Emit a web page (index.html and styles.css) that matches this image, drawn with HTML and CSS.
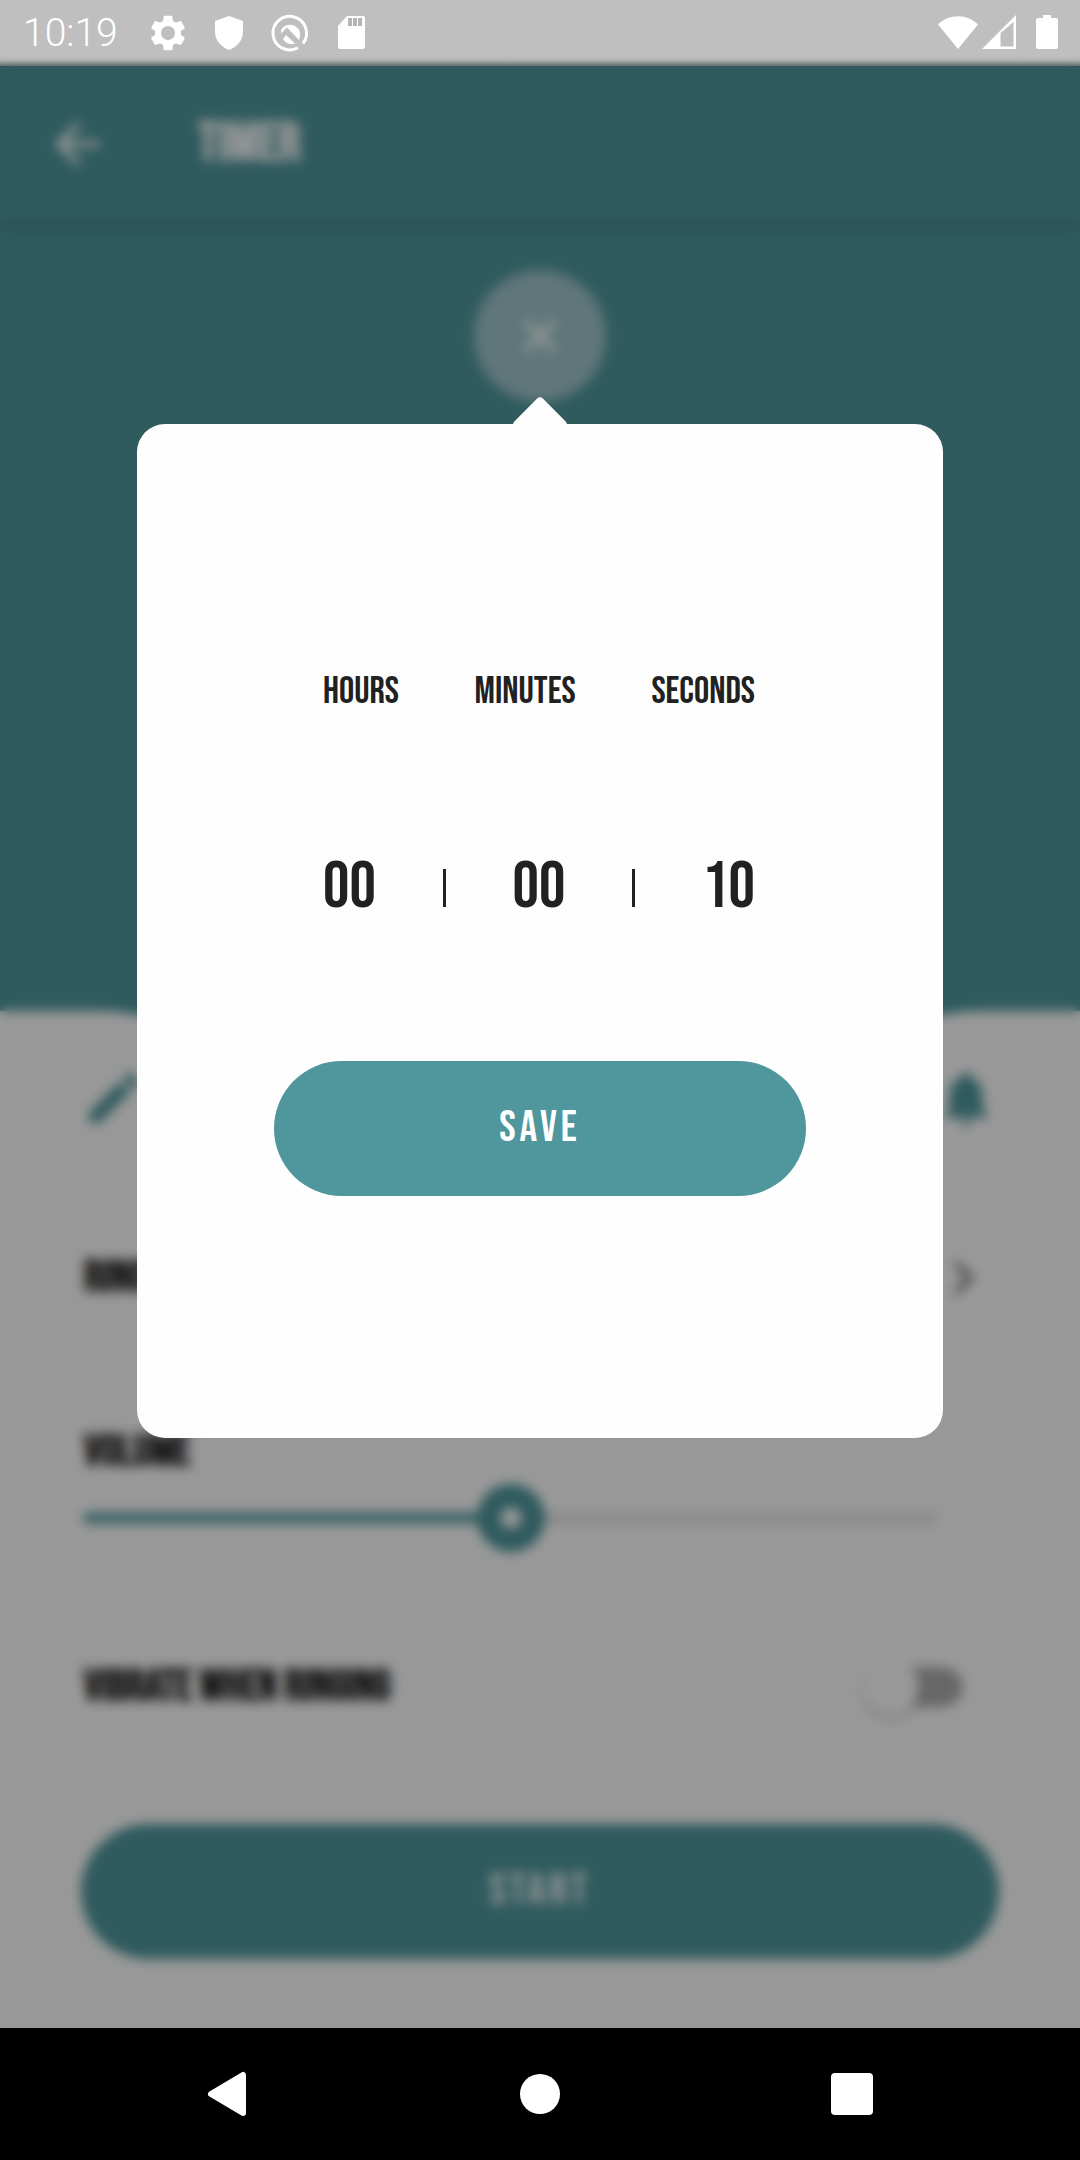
FILE: index.html
```html
<!DOCTYPE html>
<html lang="en">
<head>
  <meta charset="utf-8">
  <meta name="viewport" content="width=device-width, initial-scale=1">
  <title>Timer</title>
  <link rel="stylesheet" href="styles.css">
</head>
<body>
  <div class="screen">
    <header class="status-bar">
      <span class="clock">10:19</span>
      <div class="status-icons">
        <svg class="status-icon" viewBox="2 2 20 20" aria-hidden="true"><path d="M19.14 12.94c.04-.3.06-.61.06-.94 0-.32-.02-.64-.07-.94l2.03-1.58c.18-.14.23-.41.12-.61l-1.92-3.32c-.12-.22-.37-.29-.59-.22l-2.39.96c-.5-.38-1.03-.7-1.62-.94L14.4 2.81c-.04-.24-.24-.41-.48-.41h-3.84c-.24 0-.43.17-.47.41l-.36 2.54c-.59.24-1.13.57-1.62.94l-2.39-.96c-.22-.08-.47 0-.59.22L2.74 8.87c-.12.21-.08.47.12.61l2.03 1.58c-.05.3-.09.63-.09.94s.02.64.07.94l-2.03 1.58c-.18.14-.23.41-.12.61l1.92 3.32c.12.22.37.29.59.22l2.39-.96c.5.38 1.03.7 1.62.94l.36 2.54c.05.24.24.41.48.41h3.84c.24 0 .44-.17.47-.41l.36-2.54c.59-.24 1.13-.56 1.62-.94l2.39.96c.22.08.47 0 .59-.22l1.92-3.32c.12-.22.07-.47-.12-.61l-2.01-1.58zM12 15.9a3.9 3.9 0 1 1 0-7.8 3.9 3.9 0 0 1 0 7.8z"/></svg>
        <svg class="status-icon" viewBox="0 0 36 36" aria-hidden="true"><path d="M18 1l14 5v11c0 8-6 15-14 18C10 32 4 25 4 17V6z"/></svg>
        <svg class="status-icon" viewBox="0 0 36 36" aria-hidden="true">
          <path d="M31 28.500A16.800 16.800 0 1 0 26 32.800" fill="none" stroke="#fff" stroke-width="3"/>
          <path d="M9 15a10 10 0 0 1 18 10L15 12.500l-6 6zM14 20l9 8.500a10 10 0 0 1-12-4.500z"/>
        </svg>
        <svg class="status-icon" viewBox="0 0 36 36" aria-hidden="true"><path d="M14 1h16a2 2 0 0 1 2 2v29a2 2 0 0 1-2 2H7a2 2 0 0 1-2-2V11z"/><path d="M15 3h4v8h-4zM20 3h4v8h-4zM25 3h4v8h-4z" fill="#b4b4b4"/></svg>
      </div>
      <div class="signal-icons">
        <svg width="40" height="36" viewBox="0 0 40 36" aria-hidden="true"><path d="M0 9.500C11-1.500 29-1.500 40 9.500L20 34z"/></svg>
        <svg width="36" height="36" viewBox="0 0 36 36" aria-hidden="true"><path d="M0 34L34 0v34zM18.500 18v13.500H31.500V7z" fill-rule="evenodd"/></svg>
        <svg class="battery" width="22" height="36" viewBox="0 0 22 36" aria-hidden="true"><path d="M7 0h8v3h5a2 2 0 0 1 2 2v27a2 2 0 0 1-2 2H2a2 2 0 0 1-2-2V5a2 2 0 0 1 2-2h5z"/></svg>
      </div>
    </header>

    <div class="stage">
      <main class="app">
        <div class="app-bar">
          <button class="icon-button" aria-label="Back">
            <svg class="icon" viewBox="0 0 24 24"><path d="M20 11H7.830l5.590-5.590L12 4l-8 8 8 8 1.410-1.410L7.830 13H20z"/></svg>
          </button>
          <h1 class="title">TIMER</h1>
        </div>
        <section class="hero">
          <button class="close-button" aria-label="Close">
            <svg class="icon" viewBox="0 0 24 24"><path d="M18 7.410L16.590 6 12 10.590 7.410 6 6 7.410 10.590 12 6 16.590 7.410 18 12 13.410 16.590 18 18 16.590 13.410 12z"/></svg>
          </button>
        </section>
        <section class="sheet">
          <svg class="notch" viewBox="0 0 1080 130" preserveAspectRatio="none" aria-hidden="true"><path d="M100 0C155 2 175 14 210 45C260 100 320 130 400 130H680C760 130 820 100 870 45C905 14 925 2 980 0z"/></svg>
          <div class="tools">
            <button class="icon-button" aria-label="Edit">
              <svg class="icon" viewBox="0 0 24 24"><path d="M3 17.250V21h3.750L17.810 9.940l-3.750-3.750zM20.710 7.040a1 1 0 0 0 0-1.410l-2.340-2.340a1 1 0 0 0-1.410 0l-1.830 1.830 3.750 3.750z"/></svg>
            </button>
            <button class="icon-button" aria-label="Alerts">
              <svg class="icon" viewBox="0 0 24 24"><path d="M12 22c1.100 0 2-.9 2-2h-4c0 1.100.9 2 2 2zm6-6v-5c0-3.070-1.640-5.640-4.500-6.320V4a1.500 1.500 0 0 0-3 0v.68C7.630 5.360 6 7.920 6 11v5l-2 2v1h16v-1z"/></svg>
            </button>
          </div>
          <button class="row ringtone">
            <span>RINGTONE</span>
            <svg class="icon chevron" viewBox="0 0 24 24"><path d="M10 6L8.590 7.410 13.170 12l-4.580 4.590L10 18l6-6z"/></svg>
          </button>
          <label class="row volume-label" for="volume">VOLUME</label>
          <input class="slider" id="volume" type="range" min="0" max="100" value="50">
          <div class="row vibrate">
            <label for="vibrate">VIBRATE WHEN RINGING</label>
            <input class="switch" id="vibrate" type="checkbox">
          </div>
          <button class="pill">START</button>
        </section>
      </main>

      <div class="scrim">
        <form class="dialog" role="dialog" aria-label="Set timer">
          <div class="times labels">
            <label for="hours">HOURS</label>
            <label for="minutes">MINUTES</label>
            <label for="seconds">SECONDS</label>
          </div>
          <div class="times values">
            <input id="hours" type="text" inputmode="numeric" value="00">
            <span class="bar"></span>
            <input id="minutes" type="text" inputmode="numeric" value="00">
            <span class="bar"></span>
            <input id="seconds" type="text" inputmode="numeric" value="10">
          </div>
          <button class="pill" type="button">SAVE</button>
        </form>
      </div>
    </div>

    <nav class="nav-bar">
      <button aria-label="Back"><svg width="48" height="48" viewBox="0 0 48 48"><path d="M39 5v38L7 24z" stroke="#fff" stroke-width="6" stroke-linejoin="round"/></svg></button>
      <button aria-label="Home"><svg width="48" height="48" viewBox="0 0 48 48"><circle cx="24" cy="24" r="20"/></svg></button>
      <button aria-label="Recent apps"><svg width="48" height="48" viewBox="0 0 48 48"><rect x="3" y="3" width="42" height="42" rx="4"/></svg></button>
    </nav>
  </div>
</body>
</html>
```
FILE: styles.css
```css
* {
  box-sizing: border-box;
}

:root {
  --teal: #4f979d;
  --ink: #212121;
  --paper: #fefefe;
  --condensed: "Bebas Neue", "Roboto Condensed", "Liberation Sans Narrow", Roboto, sans-serif;
}

body {
  margin: 0;
  color: var(--ink);
  font-family: var(--condensed);
  font-size: 44px;
  line-height: 48px;
}

button,
input {
  margin: 0;
  padding: 0;
  border: 0;
  background: none;
  color: inherit;
  font: inherit;
}

svg {
  display: block;
  fill: currentColor;
}

.screen {
  display: flex;
  flex-direction: column;
  min-height: 100vh;
}

/* System bars */

.status-bar {
  display: flex;
  align-items: center;
  gap: 32px;
  height: 66px;
  padding: 0 22px 0 23px;
  background: linear-gradient(#bfbfbf 56px, #b2b2b2 60px, #667271 66px);
  color: #fff;
  font-family: Roboto, sans-serif;
  font-size: 39px;
  font-weight: 300;
}

.status-icons {
  display: flex;
  gap: 25px;
}

.status-icon {
  width: 36px;
  height: 36px;
  overflow: visible;
}

.signal-icons {
  display: flex;
  gap: 4px;
  margin-left: auto;
}

.battery {
  margin-left: 14px;
}

.nav-bar {
  display: flex;
  align-items: center;
  justify-content: space-between;
  height: 132px;
  padding: 0 204px;
  background: #000;
  color: #fff;
}

/* Timer page, with the scrim stacked over it */

.stage {
  display: grid;
  flex: 1;
}

.app,
.scrim {
  grid-area: 1 / 1;
}

.app {
  display: flex;
  flex-direction: column;
  background: var(--teal);
}

.icon {
  width: 66px;
  height: 66px;
}

.app-bar {
  display: flex;
  align-items: center;
  gap: 88px;
  height: 154px;
  padding: 2px 44px 0;
  box-shadow: 0 6px 12px rgba(0, 0, 0, 0.16);
  color: #fff;
}

.title {
  margin: 0;
  font-size: 55px;
  font-weight: 700;
}

.hero {
  display: flex;
  flex: 1;
  align-items: flex-start;
  justify-content: center;
  min-height: 400px;
  padding-top: 50px;
}

.close-button {
  display: grid;
  place-items: center;
  width: 132px;
  height: 132px;
  border-radius: 50%;
  background: rgba(255, 255, 255, 0.46);
  color: #fff;
}

.sheet {
  display: flex;
  flex-direction: column;
  padding: 0 81px 69px;
  background: var(--paper);
}

.notch {
  height: 130px;
  margin: 0 -81px -76px;
  color: var(--teal);
}

.tools {
  display: flex;
  justify-content: space-between;
  color: var(--teal);
}

.row {
  display: flex;
  align-items: center;
  justify-content: space-between;
  padding: 0 3px;
}

.ringtone {
  height: 66px;
  margin-top: 114px;
  font-weight: 700;
}

.chevron {
  color: #757575;
}

.volume-label {
  margin-top: 117px;
  font-weight: 700;
}

.slider {
  height: 68px;
  margin: 8px 62px 0 3px;
  appearance: none;
  background: linear-gradient(90deg, var(--teal) 50%, #e2e2e2 50%) center / 100% 10px no-repeat;
}

.slider::-webkit-slider-thumb {
  width: 68px;
  height: 68px;
  border-radius: 50%;
  appearance: none;
  background: radial-gradient(var(--paper) 10px, var(--teal) 11px);
}

.vibrate {
  margin-top: 105px;
  padding-right: 36px;
  font-weight: 700;
  line-height: 60px;
}

.switch {
  display: flex;
  align-items: center;
  width: 100px;
  height: 58px;
  appearance: none;
  background: radial-gradient(circle at 80px 29px, #acacac 19px, transparent 20px), linear-gradient(#acacac, #acacac) 28px 9px / 52px 40px no-repeat;
}

.switch::before {
  width: 56px;
  height: 56px;
  border-radius: 50%;
  background: var(--paper);
  box-shadow: 0 4px 6px rgba(0, 0, 0, 0.2);
  content: "";
}

.switch:checked {
  justify-content: flex-end;
}

.pill {
  height: 135px;
  padding-bottom: 2px;
  border-radius: 68px;
  background: var(--teal);
  color: #fff;
  letter-spacing: 4px;
}

.sheet .pill {
  margin-top: 107px;
}

/* Dialog */

.scrim {
  z-index: 1;
  padding: 358px 137px 0;
  background: rgba(0, 0, 0, 0.4);
  backdrop-filter: blur(6px);
}

.dialog {
  position: relative;
  display: flex;
  flex-direction: column;
  padding: 244px 137px 242px;
  border-radius: 28px;
  background: var(--paper);
}

.dialog::before {
  position: absolute;
  top: -20px;
  left: calc(50% - 20px);
  width: 40px;
  height: 40px;
  border-radius: 4px;
  background: var(--paper);
  content: "";
  transform: rotate(45deg);
}

.times {
  display: flex;
  align-items: center;
  justify-content: space-between;
  padding: 0 51px 0 49px;
}

.labels {
  font-size: 38px;
}

.values {
  margin: 136px 0 137px;
  font-size: 66px;
  line-height: 72px;
}

.values input {
  width: 2ch;
  height: 72px;
  text-align: center;
}

.bar {
  width: 3px;
  height: 38px;
  background: var(--ink);
}
```
